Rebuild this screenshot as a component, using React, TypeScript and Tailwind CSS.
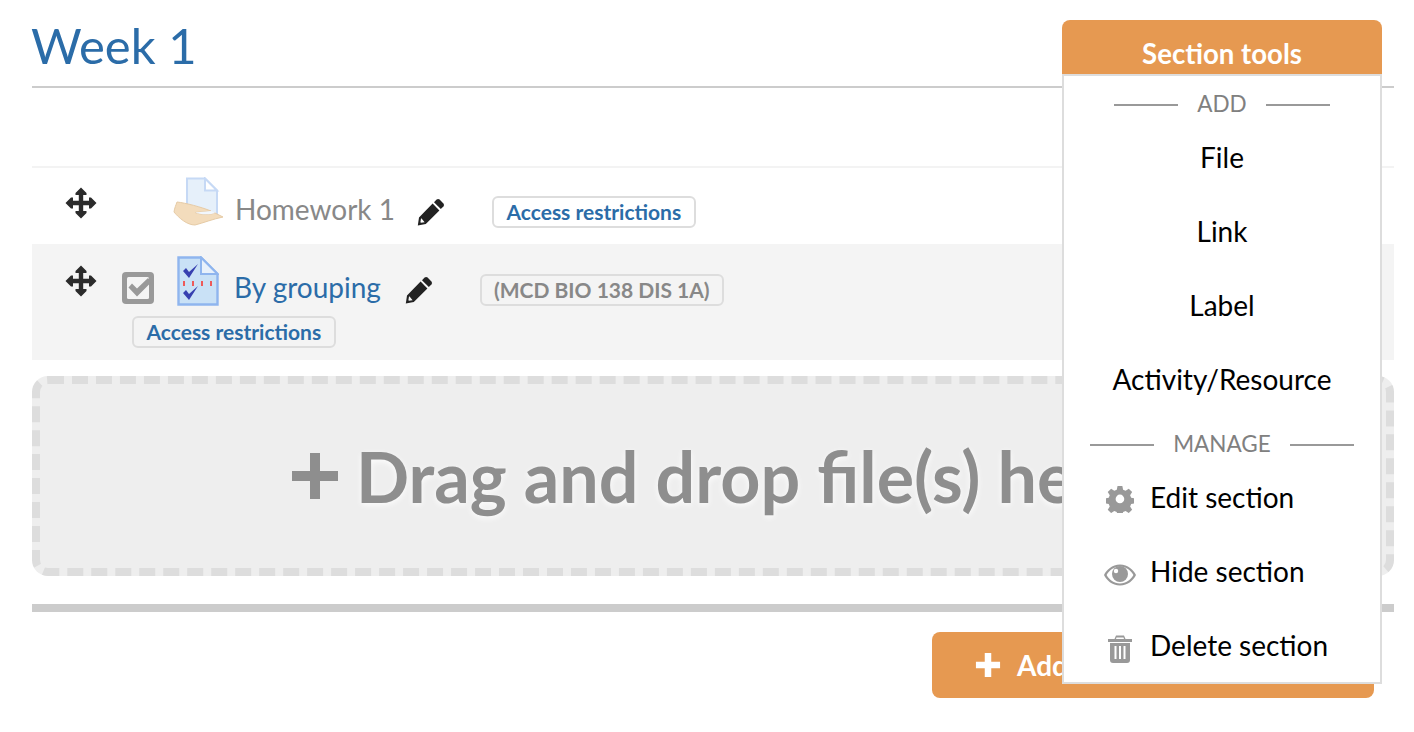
import React from "react";

const Move = () => (
  <svg width="32" height="32" viewBox="0 0 32 32" fill="#2b2b2b">
    <path d="M16 0.5 L21.5 6 V8 H18.2 V13.8 H24 V10.5 H26 L31.5 16 L26 21.5 H24 V18.2 H18.2 V24 H21.5 V26 L16 31.5 L10.5 26 V24 H13.8 V18.2 H8 V21.5 H6 L0.5 16 L6 10.5 H8 V13.8 H13.8 V8 H10.5 V6 Z" />
  </svg>
);

const Pencil = () => (
  <svg width="28" height="28" viewBox="0 0 28 28" fill="#222">
    <path d="M19.6 1.6 a2.2 2.2 0 0 1 3 0 l3.8 3.8 a2.2 2.2 0 0 1 0 3 l-2.6 2.6 -6.8 -6.8 Z" />
    <path d="M15.6 5.6 l6.8 6.8 -13.6 13.6 -8 1.6 1.2 -8.2 Z M4 20.6 l-.6 3.6 .6 .6 3.6 -.6 -3 -3.6 Z" fillRule="evenodd" />
  </svg>
);

const Badge = ({ children, gray }: { children: React.ReactNode; gray?: boolean }) => (
  <span
    className={`inline-flex h-[32px] items-center rounded-[6px] border-2 border-[#ddd] pb-[2px] text-[21px] font-bold leading-none ${
      gray ? "px-[12px] text-[#888]" : "px-[12.5px] text-[#2b6ca8]"
    }`}
  >
    {children}
  </span>
);

const HandIcon = () => (
  <svg width="52" height="50" viewBox="0 0 52 50">
    <path d="M14 1.5 H32 L44 13.5 V38 H14 Z" fill="#e6f0fa" stroke="#c6d9f5" strokeWidth="2" />
    <path d="M32 1.5 V13.5 H44 Z" fill="#fff" stroke="#c6d9f5" strokeWidth="2" />
    <path d="M4 25 C13 26 28 30 38 34 L22 35.5 C28 38 38 37.5 42 36 L50 40 C40 42 30 46 22 48 C14 48 6 41 1 35 C1.5 31 3 28 4 25 Z" fill="#f3dcbc" stroke="#e6cba6" strokeWidth="1" />
    <path d="M22 35.5 L38 34 L42 36 C38 37.5 28 38 22 35.5 Z" fill="#f2f7fd" />
  </svg>
);

const QuizIcon = () => (
  <svg width="42" height="50" viewBox="0 0 42 50">
    <path d="M1.5 1.5 H24 L40.5 18 V48.5 H1.5 Z" fill="#c9e1f6" stroke="#8fb5ee" strokeWidth="2.4" />
    <path d="M24 1.5 V18 H40.5 Z" fill="#e8f1fb" stroke="#8fb5ee" strokeWidth="2" />
    <path d="M6 15 L9 12 L12 16 L21 8 L12 22 Z" fill="#3740b0" />
    <path d="M6 37 L9 34 L12 38 L21 30 L12 44 Z" fill="#3740b0" />
    <path d="M7 25 V30 M16 25 V30 M25 25 V30 M34 25 V30" stroke="#ee5a5a" strokeWidth="2" />
  </svg>
);

const CheckBox = () => (
  <svg width="32" height="32" viewBox="0 0 32 32">
    <rect x="0" y="0" width="32" height="32" rx="4" fill="#999" />
    <rect x="5" y="5" width="22" height="22" rx="1.5" fill="#f4f4f4" />
    <path d="M6.5 15.5 L10 11.5 L15 16.5 L26 6 L29.5 10 L15 24.5 Z" fill="#999" />
  </svg>
);

const Gear = () => (
  <svg width="28" height="28" viewBox="0 0 28 28" fill="#999">
    <path fillRule="evenodd" d="M11.5 0.5 h5 l.8 3.8 2.6 1.1 3.3 -2.1 3.5 3.5 -2.1 3.3 1.1 2.6 3.8 .8 v5 l-3.8 .8 -1.1 2.6 2.1 3.3 -3.5 3.5 -3.3 -2.1 -2.6 1.1 -.8 3.8 h-5 l-.8 -3.8 -2.6 -1.1 -3.3 2.1 -3.5 -3.5 2.1 -3.3 -1.1 -2.6 -3.8 -.8 v-5 l3.8 -.8 1.1 -2.6 -2.1 -3.3 3.5 -3.5 3.3 2.1 2.6 -1.1 Z M14 9.5 a4.5 4.5 0 1 0 0 9 a4.5 4.5 0 1 0 0 -9 Z" transform="translate(0.5 0.5) scale(0.96)" />
  </svg>
);

const Eye = () => (
  <svg width="32" height="22" viewBox="0 0 32 22" fill="#999">
    <path fillRule="evenodd" d="M16 0.5 C24 0.5 29.5 6 32 11 C29.5 16 24 21.5 16 21.5 C8 21.5 2.5 16 0 11 C2.5 6 8 0.5 16 0.5 Z M16 2.6 C10 2.6 5.2 6.5 2.6 11 C5.2 15.5 10 19.4 16 19.4 C22 19.4 26.8 15.5 29.4 11 C26.8 6.5 22 2.6 16 2.6 Z" />
    <circle cx="16" cy="10" r="8" />
    <circle cx="12" cy="7" r="2.2" fill="#fff" />
  </svg>
);

const Trash = () => (
  <svg width="26" height="28" viewBox="0 0 26 28" fill="#999">
    <path fillRule="evenodd" d="M9 0.5 H17 L18.5 4 H25 V7 H1 V4 H7.5 Z M9.5 2.5 L9 4 H17 L16.5 2.5 Z" />
    <path fillRule="evenodd" d="M3 8 H23 V25 A3 3 0 0 1 20 28 H6 A3 3 0 0 1 3 25 Z M7.5 11 V24 H9.5 V11 Z M12 11 V24 H14 V11 Z M16.5 11 V24 H18.5 V11 Z" />
  </svg>
);

const Divider = ({ label }: { label: string }) => (
  <div className="flex h-[28px] items-center justify-center gap-[19px]">
    <span className="mt-[2px] h-[2px] w-[64px] bg-[#999]" />
    <span className="text-[22.5px] leading-none text-[#808080]">{label}</span>
    <span className="mt-[2px] h-[2px] w-[64px] bg-[#999]" />
  </div>
);

const CenterItem = ({ children }: { children: React.ReactNode }) => (
  <div className="flex h-[74px] items-center justify-center text-[28px] leading-none text-black">{children}</div>
);

const IconItem = ({ icon, low, children }: { icon: React.ReactNode; low?: boolean; children: React.ReactNode }) => (
  <div className="flex h-[74px] items-center text-[28px] leading-none text-black">
    <span className={`flex w-[86px] justify-center pl-[25px] ${low ? "pt-[8px]" : "pt-[4px]"}`}>{icon}</span>
    <span>{children}</span>
  </div>
);

export default function App() {
  return (
    <div
      className="relative h-[732px] w-[1414px] overflow-hidden bg-white pl-[32px] pr-[20px]"
      style={{ fontFamily: "Lato, 'Open Sans', sans-serif" }}
    >
      <div className="flex h-[88px] items-start border-b-2 border-[#ccc] pt-[16px]">
        <h1 className="-ml-[1px] text-[49px] leading-[58px] text-[#2b6ca8]">Week 1</h1>
      </div>

      <div className="mt-[78px] border-t-2 border-[#f3f3f3]">
        <div className="flex h-[76px] items-start">
          <span className="ml-[33px] mt-[19px]"><Move /></span>
          <span className="ml-[76px] mt-[9px]"><HandIcon /></span>
          <span className="ml-[10px] mt-[23px] text-[28px] leading-[36px] text-[#888]">Homework 1</span>
          <span className="ml-[22px] mt-[30px]"><Pencil /></span>
          <span className="ml-[47px] mt-[28px]"><Badge>Access restrictions</Badge></span>
        </div>

        <div className="h-[116px] bg-[#f4f4f4]">
          <div className="flex h-[72px] items-start">
            <span className="ml-[33px] mt-[21px]"><Move /></span>
            <span className="ml-[25px] mt-[28px]"><CheckBox /></span>
            <span className="ml-[23px] mt-[12px]"><QuizIcon /></span>
            <span className="ml-[15px] mt-[25px] text-[28px] leading-[36px] text-[#2b6ca8]">By grouping</span>
            <span className="ml-[24px] mt-[32px]"><Pencil /></span>
            <span className="ml-[47px] mt-[30px]"><Badge gray>(MCD BIO 138 DIS 1A)</Badge></span>
          </div>
          <div className="pl-[100px]"><Badge>Access restrictions</Badge></div>
        </div>
      </div>

      <div className="mt-[16px] flex h-[200px] items-center justify-center overflow-hidden whitespace-nowrap rounded-[16px] border-[8px] border-dashed border-[#ddd] bg-[#eee] pl-[252px]">
        <div
          className="flex w-full items-center text-[70px] font-bold leading-none text-[#8e8e8e]"
          style={{ textShadow: "0 2px 6px rgba(255,255,255,0.9)" }}
        >
          <svg width="46" height="46" viewBox="0 0 46 46" fill="#8e8e8e" className="mr-[18px] shrink-0">
            <path d="M18 0 H28 V18 H46 V28 H28 V46 H18 V28 H0 V18 H18 Z" />
          </svg>
          Drag and drop file(s) here
        </div>
      </div>

      <div className="mt-[28px] h-[8px] bg-[#ccc]" />

      <div className="mt-[20px] flex justify-end pr-[20px]">
        <div className="flex h-[66px] w-[442px] items-center rounded-[8px] bg-[#e69951] pl-[43px] text-[28px] font-bold text-white">
          <svg width="26" height="26" viewBox="0 0 28 28" fill="#fff" className="mr-[16px]">
            <path d="M10.5 1 H17.5 V10.5 H27 V17.5 H17.5 V27 H10.5 V17.5 H1 V10.5 H10.5 Z" />
          </svg>
          Add section
        </div>
      </div>

      <div className="absolute left-[1062px] top-[20px] w-[320px]">
        <div className="flex h-[55px] items-end justify-center rounded-t-[8px] bg-[#e69951] pb-[3px] text-[27.6px] font-bold leading-[36px] text-white">
          Section tools
        </div>
        <div className="-mt-[1px] h-[610px] border-2 border-[#ddd] bg-white pt-[14px]">
          <Divider label="ADD" />
          <div className="mt-[2px]">
            <CenterItem>File</CenterItem>
            <CenterItem>Link</CenterItem>
            <CenterItem>Label</CenterItem>
            <CenterItem>Activity/Resource</CenterItem>
          </div>
          <div className="mt-[14px]">
            <Divider label="MANAGE" />
          </div>
          <div className="mt-[2px]">
            <IconItem icon={<Gear />}>Edit section</IconItem>
            <IconItem icon={<Eye />} low>Hide section</IconItem>
            <IconItem icon={<Trash />} low>Delete section</IconItem>
          </div>
        </div>
      </div>
    </div>
  );
}
